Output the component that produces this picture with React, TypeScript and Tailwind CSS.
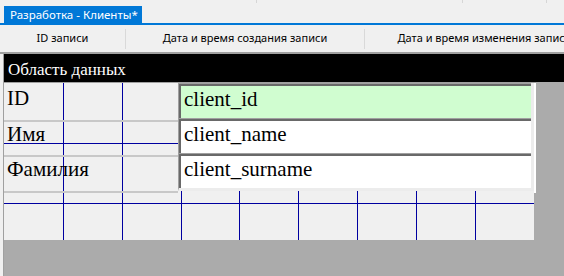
import React from 'react';

const serif = { fontFamily: "'Liberation Serif', 'Times New Roman', serif" };

const gridX = [59, 118, 177, 235, 294, 353, 412, 471];
const gridY = [60, 120];

const labels = [
  { text: 'ID', cls: 'h-[39px] pt-[3px]' },
  { text: 'Имя', cls: 'h-[35px] pt-0' },
  { text: 'Фамилия', cls: 'h-[36px] pt-0' },
];

const fields = [
  { name: 'client_id', bg: 'bg-[#d0fdd0]' },
  { name: 'client_name', bg: 'bg-white' },
  { name: 'client_surname', bg: 'bg-white' },
];

function Grid() {
  return (
    <svg className="absolute inset-0" width="530" height="157">
      {gridX.map((x) => (
        <line key={x} x1={x + 0.5} y1={0} x2={x + 0.5} y2={157} stroke="#0000a0" strokeWidth="1" />
      ))}
      {gridY.map((y) => (
        <line key={y} x1={0} y1={y + 0.5} x2={530} y2={y + 0.5} stroke="#0000a0" strokeWidth="1" />
      ))}
    </svg>
  );
}

export default function App() {
  return (
    <div
      className="w-[564px] h-[276px] overflow-hidden bg-[#f0f0f0] flex flex-col text-black"
      style={{ fontFamily: "'Noto Sans', 'Open Sans', sans-serif" }}
    >
      {/* toolbar remnant */}
      <div className="h-[6px] flex shrink-0">
        <div className="w-[256px]" />
        <div className="w-[206px] h-[3px] border-l border-[#d6d6d6]" />
        <div className="w-[84px] h-[3px] border-l border-[#d6d6d6]" />
        <div className="h-[3px] border-l border-[#d6d6d6]" />
      </div>

      {/* document tab */}
      <div className="h-[17px] pl-[4px] flex shrink-0">
        <div className="w-[138px] bg-[#0078d7] text-white text-[11.5px] leading-[17px] pl-[6px] whitespace-nowrap overflow-hidden">
          Разработка - Клиенты*
        </div>
      </div>
      <div className="h-[2px] bg-[#0078d7] shrink-0" />

      {/* column header */}
      <div className="h-[27px] flex items-center shrink-0 text-[11px] whitespace-nowrap overflow-hidden">
        <div className="w-[125px] shrink-0 text-center">ID записи</div>
        <div className="w-px h-[20px] bg-[#d9d9d9] shrink-0" />
        <div className="w-[238px] shrink-0 text-center">Дата и время создания записи</div>
        <div className="w-px h-[20px] bg-[#d9d9d9] shrink-0" />
        <div className="w-[239px] shrink-0 text-center">Дата и время изменения записи</div>
      </div>
      <div className="h-[2px] bg-[#a0a0a0] shrink-0" />

      {/* designer body */}
      <div className="flex-1 flex">
        <div className="w-[3px] bg-[#f0f0f0] shrink-0" />
        <div className="w-px bg-[#a0a0a0] shrink-0" />
        <div className="flex-1 flex flex-col bg-[#ababab]">
          <div
            className="h-[28px] bg-black text-white text-[17px] leading-[20px] pt-[6px] pl-[4px] shrink-0 whitespace-nowrap"
            style={serif}
          >
            Область данных
          </div>
          <div className="h-px w-[532px] bg-[#a0a0a0] shrink-0" />

          <div className="w-[530px] h-[157px] bg-[#f0f0f0] relative shrink-0">
            <Grid />
            <div className="relative flex text-[21px] leading-[24px]" style={serif}>
              <div className="w-[174px] shrink-0 flex flex-col">
                {labels.map((l) => (
                  <div key={l.text} className={`${l.cls} pl-[3px] border-b-2 border-[#c8c8c8] whitespace-nowrap`}>
                    {l.text}
                  </div>
                ))}
              </div>
              <div className="w-[358px] shrink-0 border-r-2 border-white">
                <div className="border-l border-[#a0a0a0] border-r-[3px] border-b-[3px] border-r-[#ececec] border-b-[#ececec]">
                  {fields.map((f) => (
                    <div key={f.name} className="border-t border-[#a0a0a0]">
                      <div className={`h-[34px] border-t-2 border-l-2 border-[#696969] ${f.bg} pl-[3px] pt-[1px]`}>
                        {f.name}
                      </div>
                    </div>
                  ))}
                </div>
              </div>
            </div>
          </div>
        </div>
      </div>
    </div>
  );
}
